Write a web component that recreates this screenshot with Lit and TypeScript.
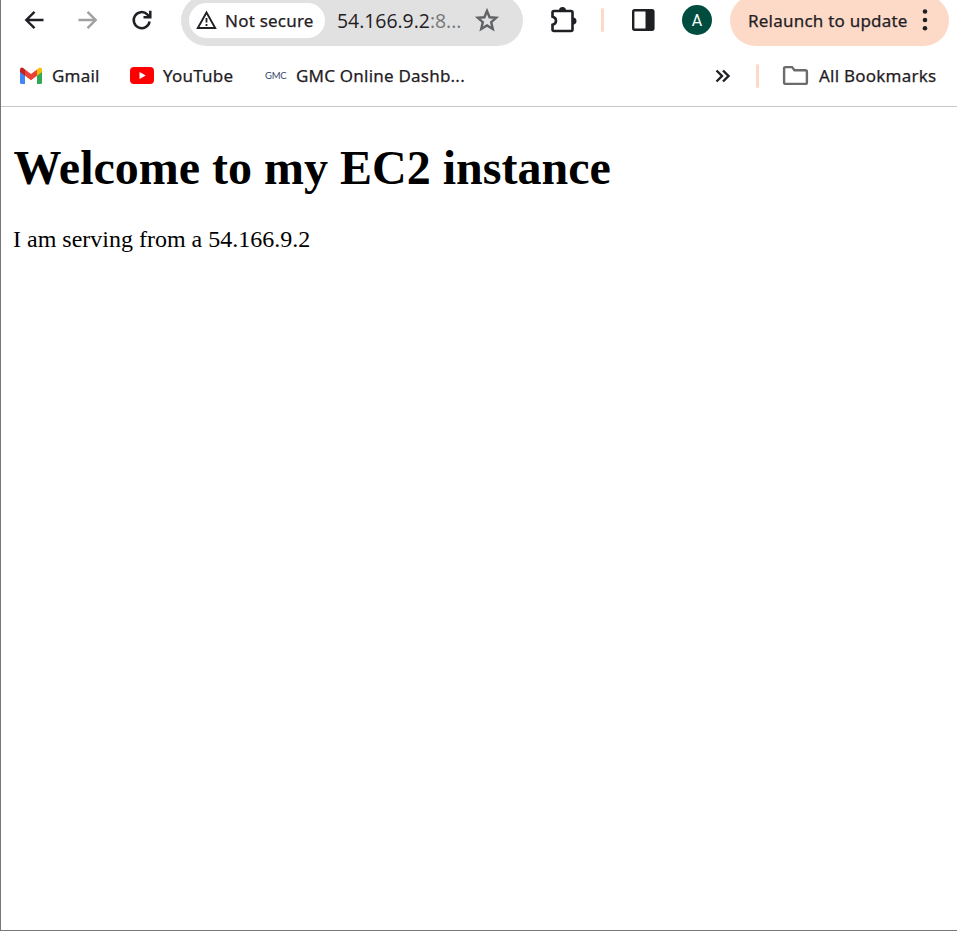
import { LitElement, html, css, svg } from "lit";
import { customElement } from "lit/decorators.js";

const back = svg`<path d="M19.5 10H2.5M10.5 1.8L2.3 10L10.5 18.2" fill="none" stroke="currentColor" stroke-width="2.4"/>`;

@customElement("app-root")
export class AppRoot extends LitElement {
  static styles = css`
    :host {
      display: block;
      box-sizing: border-box;
      height: 931px;
      overflow: hidden;
      background: #fff;
      border-left: 1px solid #777;
      border-bottom: 1px solid #777;
      color: #1f2024;
      font-family: "Noto Sans", "Open Sans", sans-serif;
      font-size: 17px;
    }
    svg { display: block; flex: none; overflow: visible; }
    .toolbar, .bookmarks, .address, .chip, .update, .mark { display: flex; align-items: center; box-sizing: border-box; white-space: nowrap; }
    .chip span, .update span, .mark span { -webkit-text-stroke: 0.25px; letter-spacing: 0.22px; }
    .toolbar { height: 51px; margin-top: -5px; padding-left: 23px; }
    .toolbar > svg { margin-bottom: 1px; }
    .forward { margin-left: 34px; color: #a0a0a1; }
    .reload { margin-left: 34px; }
    .address { width: 342px; height: 51px; margin-left: 29px; padding-left: 8px; border-radius: 26px; background: #e1e1e1; flex: none; }
    .chip { width: 136px; height: 35px; padding-left: 7px; border-radius: 18px; background: #fff; }
    .chip span { margin-left: 8px; }
    .url { width: 126px; margin-left: 12px; font-size: 19.4px; font-family: "Open Sans", "Noto Sans", sans-serif; }
    .port { color: #75777a; }
    .star { margin: 0 0 2px 12px; }
    .toolbar > .puzzle { margin: 0 0 2px 28px; }
    .divider { width: 3px; height: 24px; border-radius: 2px; background: #fddac8; flex: none; }
    .toolbar .divider { margin: 0 0 1px 24px; }
    .panel { margin-left: 28px; }
    .avatar { display: flex; align-items: center; justify-content: center; width: 30px; height: 30px; margin: 0 0 1px 27px; border-radius: 50%; background: #004d40; color: #fff; font: 16px "Roboto", sans-serif; flex: none; }
    .update { width: 219px; height: 51px; margin: 0 0 1px 18px; padding-left: 18px; border-radius: 26px; background: #fddac8; flex: none; }
    .update span { width: 173px; }
    .bookmarks { height: 61px; padding-left: 19px; border-bottom: 1px solid #c8c8c8; }
    .bookmarks svg, .bookmarks .divider { margin-bottom: 1px; }
    .mark { flex: none; }
    .mark span { margin-left: 10px; margin-bottom: 2px; }
    .gmail { width: 110px; }
    .youtube { width: 135px; }
    .youtube span { margin-left: 9px; }
    .gmc { width: 450px; }
    .mark .badge { width: 21px; margin-left: 0; font: 9.5px "Lato", sans-serif; letter-spacing: -0.3px; color: #39486d; -webkit-text-stroke: 0; }
    .bookmarks .divider { margin-left: 26px; }
    .all { margin-left: 24px; }
    .all span { margin-left: 11px; }
    main { padding-left: 12px; color: #000; font-family: "Liberation Serif", serif; }
    h1 { margin: 0 0 0 0.5px; padding-top: 33px; font-size: 48px; line-height: 55px; white-space: nowrap; }
    p { margin: 31px 0 0; font-size: 24px; line-height: 27px; }
  `;

  render() {
    return html`
      <nav class="toolbar">
        <svg width="20" height="20" viewBox="0 0 20 20">${back}</svg>
        <svg class="forward" width="20" height="20" viewBox="0 0 20 20"><g transform="matrix(-1 0 0 1 20 0)">${back}</g></svg>
        <svg class="reload" width="20" height="20" viewBox="0 0 20 20"><path d="M17.6 11.5A8 8 0 1 1 15.2 4.3L17.8 6.8M18.3 .8V7.3H11.5" fill="none" stroke="currentColor" stroke-width="2.5"/></svg>
        <div class="address">
          <div class="chip">
            <svg width="21" height="19" viewBox="0 0 21 19"><path d="M10.5 1.5L19.2 17H1.8Z" fill="none" stroke="currentColor" stroke-width="1.9"/><path d="M10.5 7v4.5M10.5 13v2" stroke="currentColor" stroke-width="1.8"/></svg>
            <span class="secure">Not secure</span>
          </div>
          <div class="url">54.166.9.2<span class="port">:8...</span></div>
          <svg class="star" width="24" height="24" viewBox="0 0 24 24"><path d="M12 3L14.6 9.3L21.2 9.8L16.2 14.2L17.8 21L12 17.4L6.2 21L7.8 14.2L2.8 9.8L9.4 9.3Z" fill="none" stroke="#606266" stroke-width="2.4"/></svg>
        </div>
        <svg class="puzzle" width="26" height="26" viewBox="0 0 26 26"><path d="M3 4H20Q21.5 4 21.5 5.5V22.5Q21.5 24 20 24H3Q1.5 24 1.5 22.5V17.8Q5 17 5 13.8T1.5 9.8V5.5Q1.5 4 3 4Z" fill="none" stroke="currentColor" stroke-width="2.6"/><path d="M8 3.5A3.5 3.5 0 0 1 15 3.5ZM22 10.5A3.5 3.5 0 0 1 22 17.5Z" fill="currentColor"/></svg>
        <div class="divider"></div>
        <svg class="panel" width="23" height="22" viewBox="0 0 23 22"><rect x="1.2" y="1.2" width="20.2" height="19.6" rx="1.5" fill="none" stroke="currentColor" stroke-width="2.4"/><path d="M13.5 1H21V21H13.5Z" fill="currentColor"/></svg>
        <div class="avatar">A</div>
        <div class="update">
          <span>Relaunch to update</span>
          <svg width="8" height="22" viewBox="0 0 8 22"><g fill="currentColor"><circle cx="4" cy="2.5" r="2.3"/><circle cx="4" cy="11" r="2.3"/><circle cx="4" cy="19.3" r="2.3"/></g></svg>
        </div>
      </nav>
      <nav class="bookmarks">
        <div class="mark gmail">
          <svg width="22" height="17" viewBox="0 0 22 17"><path d="M0 3V15.5Q0 17 1.5 17H5V6Z" fill="#4285f4"/><path d="M22 3V15.5Q22 17 20.5 17H17V6Z" fill="#34a853"/><path d="M17 2.5L18.5 1.2Q20 0 21.3 .9Q22 1.4 22 3V5L17 8.8Z" fill="#fbbc04"/><path d="M5 2.5L11 7L17 2.5V8.8L11 13.2L5 8.8Z" fill="#ea4335"/><path d="M5 2.5L3.5 1.2Q2 0 .7 .9Q0 1.4 0 3V5L5 8.8Z" fill="#c5221f"/></svg>
          <span>Gmail</span>
        </div>
        <div class="mark youtube">
          <svg width="24" height="17" viewBox="0 0 24 17"><rect width="24" height="17" rx="4" fill="#f00"/><path d="M9.5 5L15.8 8.5L9.5 12Z" fill="#fff"/></svg>
          <span>YouTube</span>
        </div>
        <div class="mark gmc"><span class="badge">GMC</span><span>GMC Online Dashb...</span></div>
        <svg width="15" height="14" viewBox="0 0 15 14"><path d="M1.5 1.5L7 7L1.5 12.5M8 1.5L13.5 7L8 12.5" fill="none" stroke="currentColor" stroke-width="2.4"/></svg>
        <div class="divider"></div>
        <div class="mark all">
          <svg width="25" height="19" viewBox="0 0 25 19"><path d="M2.7 1.1H9L11.5 4.2H22.3Q23.9 4.2 23.9 5.7V16.4Q23.9 17.9 22.3 17.9H2.7Q1.1 17.9 1.1 16.4V2.6Q1.1 1.1 2.7 1.1Z" fill="none" stroke="#6b6b6b" stroke-width="2.4"/></svg>
          <span>All Bookmarks</span>
        </div>
      </nav>
      <main>
        <h1>Welcome to my EC2 instance</h1>
        <p>I am serving from a 54.166.9.2</p>
      </main>
    `;
  }
}
